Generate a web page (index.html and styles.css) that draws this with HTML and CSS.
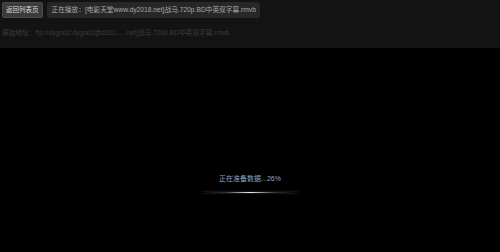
FILE: index.html
```html
<!DOCTYPE html>
<html>
<head>
<meta charset="utf-8">
<link rel="stylesheet" href="styles.css">
</head>
<body>
<div class="top">
  <div class="bar">
    <span class="btn">返回列表页</span>
    <span class="playing">正在播放：[电影天堂www.dy2018.net]战马.720p.BD中英双字幕.rmvb</span>
  </div>
  <div class="source">原始地址：ftp://dygod2:dygod2@d311......net]战马.720p.BD中英双字幕.rmvb</div>
</div>
<div class="stage">
  <div class="loading">正在准备数据...26%</div>
  <div class="glow"></div>
</div>
</body>
</html>
```
FILE: styles.css
```css
html, body {
  margin: 0;
  padding: 0;
  background: #000;
  width: 500px;
  height: 252px;
  overflow: hidden;
  font-family: "Liberation Sans", "Noto Sans CJK SC", sans-serif;
}
.top {
  background: #131313;
  height: 48px;
  box-sizing: border-box;
  padding: 2px 0 0 2px;
}
.bar {
  display: flex;
  align-items: center;
  gap: 4px;
  height: 16px;
}
.btn {
  background: #3b3b3b;
  border: 1px solid #4a4a4a;
  border-radius: 2px;
  color: #d8d8d8;
  font-size: 6.5px;
  line-height: 14px;
  padding: 0 3px;
  box-sizing: border-box;
  height: 16px;
}
.playing {
  background: #272727;
  border-radius: 3px;
  color: #a8a8a8;
  font-size: 6.7px;
  line-height: 16px;
  height: 16px;
  padding: 0 4px 0 5px;
}
.source {
  margin-top: 10px;
  color: #3c3c3c;
  font-size: 6.7px;
  line-height: 9px;
}
.stage {
  display: flex;
  flex-direction: column;
  align-items: center;
  padding-top: 126px;
}
.loading {
  color: #8ea6c4;
  font-size: 7px;
  line-height: 10px;
}
.glow {
  margin-top: 8px;
  width: 96px;
  height: 1px;
  background: linear-gradient(to right, rgba(255,255,255,0) 0%, rgba(140,150,170,0.35) 25%, #f0f0f0 50%, rgba(140,150,170,0.35) 75%, rgba(255,255,255,0) 100%);
  box-shadow: 0 0 2px rgba(200,210,230,0.4);
}
```
